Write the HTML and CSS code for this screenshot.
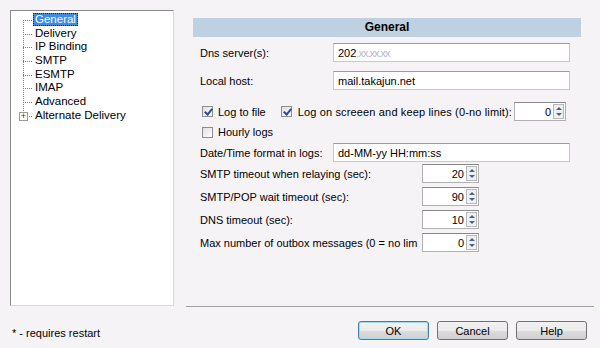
FILE: index.html
```html
<!DOCTYPE html>
<html lang="en">
<head>
    <meta charset="UTF-8">
    <title>Options - General</title>
    <link rel="stylesheet" href="styles.css">
</head>
<body>
<div class="window">
    <div class="main">
        <!-- Cây danh mục bên trái -->
        <div class="tree">
            <div class="branch">
                <div class="node"><span class="sel">General</span></div>
                <div class="node"><span>Delivery</span></div>
                <div class="node"><span>IP Binding</span></div>
                <div class="node"><span>SMTP</span></div>
                <div class="node"><span>ESMTP</span></div>
                <div class="node"><span>IMAP</span></div>
                <div class="node"><span>Advanced</span></div>
                <div class="node last"><i class="plus">+</i><span>Alternate Delivery</span></div>
            </div>
        </div>

        <!-- Khung cài đặt bên phải -->
        <div class="side">
            <div class="panel">
                <div class="head">General</div>

                <div class="row r-dns">
                    <label class="lbl">Dns server(s):</label>
                    <div class="field">202<span class="blur">.xx.xx.xx</span></div>
                </div>
                <div class="row r-host">
                    <label class="lbl">Local host:</label>
                    <div class="field">mail.takajun.net</div>
                </div>
                <div class="row r-log">
                    <span class="check on"></span><span class="ctext">Log to file</span>
                    <span class="check on c2"></span><span class="ctext wide-text">Log on screeen and keep lines (0-no limit):</span>
                    <div class="spin wide"><span class="num">0</span><span class="arrows"><b class="up"></b><b class="down"></b></span></div>
                </div>
                <div class="row r-hourly">
                    <span class="check"></span><span class="ctext">Hourly logs</span>
                </div>
                <div class="row r-date">
                    <label class="lbl">Date/Time format in logs:</label>
                    <div class="field">dd-MM-yy HH:mm:ss</div>
                </div>
                <div class="row r-num first">
                    <label class="lbl2">SMTP timeout when relaying (sec):</label>
                    <div class="spin"><span class="num">20</span><span class="arrows"><b class="up"></b><b class="down"></b></span></div>
                </div>
                <div class="row r-num">
                    <label class="lbl2">SMTP/POP wait timeout (sec):</label>
                    <div class="spin"><span class="num">90</span><span class="arrows"><b class="up"></b><b class="down"></b></span></div>
                </div>
                <div class="row r-num">
                    <label class="lbl2">DNS timeout (sec):</label>
                    <div class="spin"><span class="num">10</span><span class="arrows"><b class="up"></b><b class="down"></b></span></div>
                </div>
                <div class="row r-num">
                    <label class="lbl2">Max number of outbox messages (0 = no lim</label>
                    <div class="spin"><span class="num">0</span><span class="arrows"><b class="up"></b><b class="down"></b></span></div>
                </div>
            </div>
        </div>
    </div>

    <!-- Hàng nút dưới cùng -->
    <div class="bottom">
        <span class="note">* - requires restart</span>
        <div class="buttons">
            <button class="btn default">OK</button>
            <button class="btn">Cancel</button>
            <button class="btn">Help</button>
        </div>
    </div>
</div>
</body>
</html>
```

FILE: styles.css
```css
body {
    margin: 0;
    background: #f6f3f6;
    font-family: "Liberation Sans", Arial, sans-serif;
    font-size: 11px;
    color: #000;
    white-space: nowrap;
}

.window {
    width: 600px;
    height: 348px;
    padding: 10px 6px 0 10px;
    box-sizing: border-box;
}

.main {
    display: flex;
    gap: 12px;
}

/* Cây bên trái */
.tree {
    width: 164px;
    height: 296px;
    box-sizing: border-box;
    border: 1px solid;
    border-color: #8a8a8a #d8d8d8 #d8d8d8 #8a8a8a;
    background: #fff;
    padding: 2px 0 0 12px;
    font-size: 11.5px;
}

.branch {
    position: relative;
}

.branch::before {
    content: "";
    position: absolute;
    left: 0;
    top: 7px;
    height: 95px;
    border-left: 1px dotted #808080;
}

.node {
    height: 13.7px;
    line-height: 13.7px;
    display: flex;
    align-items: center;
    position: relative;
    padding-left: 10px;
}

.node::before {
    content: "";
    position: absolute;
    left: 0;
    top: 7px;
    width: 9px;
    border-top: 1px dotted #808080;
}

.node span {
    padding: 0 2px;
}

.node .sel {
    background: #3e8ae6;
    color: #fff;
    outline: 1px dotted #222;
    outline-offset: -1px;
    line-height: 13px;
}

.plus {
    position: absolute;
    left: -4px;
    top: 3px;
    width: 7px;
    height: 7px;
    border: 1px solid #999;
    background: #fff;
    font-style: normal;
    font-size: 9px;
    line-height: 7px;
    text-align: center;
    color: #333;
    z-index: 1;
}

/* Khung bên phải */
.side {
    width: 408px;
    height: 296px;
    border-bottom: 1px solid #a0a0a0;
}

.panel {
    margin: 8px 13px 0 7px;
    padding-right: 11px;
}

.head {
    height: 19px;
    line-height: 19px;
    background: #bfd0e1;
    text-align: center;
    font-weight: bold;
    font-size: 12px;
    margin-right: -11px;
}

.row {
    display: flex;
    align-items: center;
    padding-left: 7px;
}

.r-dns { margin-top: 6px; }
.r-host { margin-top: 9px; }
.r-log { margin-top: 12px; }
.r-hourly { margin-top: 3px; height: 16px; }
.r-date { margin-top: 3px; }
.r-num { margin-top: 4px; }
.r-num.first { margin-top: 2px; }

.lbl {
    width: 133px;
    flex: none;
}

.lbl2 {
    width: 222px;
    flex: none;
    overflow: hidden;
}

.field {
    flex: 1;
    height: 19px;
    line-height: 18px;
    box-sizing: border-box;
    border: 1px solid #c9c9c9;
    border-top-color: #9a9a9a;
    background: #fff;
    padding-left: 4px;
}

.blur {
    color: #b8b8c8;
    letter-spacing: -1px;
}

.check {
    width: 11px;
    height: 11px;
    box-sizing: border-box;
    border: 1px solid #8e8f8f;
    background: linear-gradient(135deg, #e0e0e0, #fff);
    margin-left: 2px;
    position: relative;
    flex: none;
}

.check.on::after {
    content: "";
    position: absolute;
    left: 3px;
    top: 0;
    width: 3px;
    height: 6px;
    border: solid #2a4c9a;
    border-width: 0 2px 2px 0;
    transform: rotate(40deg);
}

.ctext {
    margin-left: 5px;
}

.wide-text {
    margin-left: 6px;
    letter-spacing: 0.15px;
}

.check.c2 {
    margin-left: 15px;
}

.spin {
    width: 57px;
    height: 19px;
    box-sizing: border-box;
    border: 1px solid #b0b0b0;
    border-top-color: #888;
    background: #fff;
    display: flex;
    align-items: center;
    flex: none;
}

.spin.wide {
    width: 52px;
    margin-left: auto;
    margin-right: 4px;
}

.num {
    flex: 1;
    text-align: right;
    padding-right: 2px;
}

.arrows {
    width: 11px;
    height: 15px;
    margin-right: 1px;
    border: 1px solid #b8b8b8;
    box-sizing: border-box;
    background: #eef0f4;
    display: flex;
    flex-direction: column;
    align-items: center;
    justify-content: space-around;
}

.arrows b {
    width: 0;
    height: 0;
    border-left: 3px solid transparent;
    border-right: 3px solid transparent;
}

.arrows .up {
    border-bottom: 3px solid #4d6185;
}

.arrows .down {
    border-top: 3px solid #4d6185;
}

/* Hàng dưới cùng */
.bottom {
    display: flex;
    justify-content: space-between;
    align-items: flex-start;
}

.note {
    margin-left: 2px;
    margin-top: 20px;
}

.buttons {
    display: flex;
    gap: 8px;
    margin-right: 7px;
    margin-top: 14px;
}

.btn {
    width: 71px;
    height: 19px;
    padding: 0;
    font-family: inherit;
    font-size: 11px;
    border: 1px solid #707070;
    border-radius: 3px;
    background: linear-gradient(#f2f2f2, #ebebeb 50%, #dddddd 51%, #cfcfcf);
}

.btn.default {
    border-color: #3c7fb1;
    box-shadow: inset 0 0 0 1px #a8d8f0;
}
```
